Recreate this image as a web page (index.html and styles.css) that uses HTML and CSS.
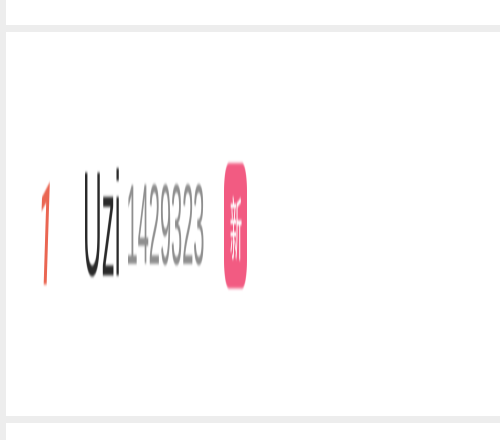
FILE: index.html
```html
<!DOCTYPE html>
<html>
<head>
<meta charset="utf-8">
<link rel="stylesheet" href="styles.css">
</head>
<body>
<div class="list">
  <div class="card card-prev"></div>
  <div class="card card-main">
    <div class="row">
      <span class="rank">1</span>
      <span class="name">Uzi</span>
      <span class="count">1429323</span>
      <span class="badge">新</span>
    </div>
  </div>
  <div class="card card-next"></div>
</div>
</body>
</html>
```
FILE: styles.css
```css
html, body {
  margin: 0;
  padding: 0;
  background: #ededed;
  width: 500px;
  height: 440px;
  overflow: hidden;
  font-family: "Liberation Sans", "Noto Sans CJK SC", sans-serif;
}
.list {
  display: flex;
  flex-direction: column;
  gap: 7px;
  padding-left: 6px;
}
.card {
  background: #ffffff;
}
.card-prev {
  height: 25px;
}
.card-main {
  height: 384px;
  display: flex;
  align-items: center;
  padding-left: 33px;
}
.card-next {
  height: 20px;
}
.row {
  display: flex;
  align-items: center;
  transform: scaleY(5.7);
  transform-origin: center;
  filter: blur(0.3px);
}
.rank {
  display: inline-block;
  font-family: Roboto, "Liberation Sans", sans-serif;
  font-size: 25px;
  font-weight: 500;
  color: #ea6652;
  line-height: 1;
  width: 14px;
  transform: skewX(-10deg) translateY(1.5px);
}
.name {
  margin-left: 30px;
  font-size: 26px;
  color: #2a2a2a;
  line-height: 1;
}
.count {
  margin-left: 6px;
  font-size: 20px;
  color: #8f8f8f;
  line-height: 1;
}
.badge {
  margin-left: 20px;
  width: 23px;
  height: 22px;
  border-radius: 5px;
  background: #f25b82;
  color: #ffffff;
  font-family: "Noto Sans CJK SC", sans-serif;
  font-size: 12px;
  display: flex;
  align-items: center;
  justify-content: center;
  line-height: 1;
  transform: translateY(0.3px);
}
```
